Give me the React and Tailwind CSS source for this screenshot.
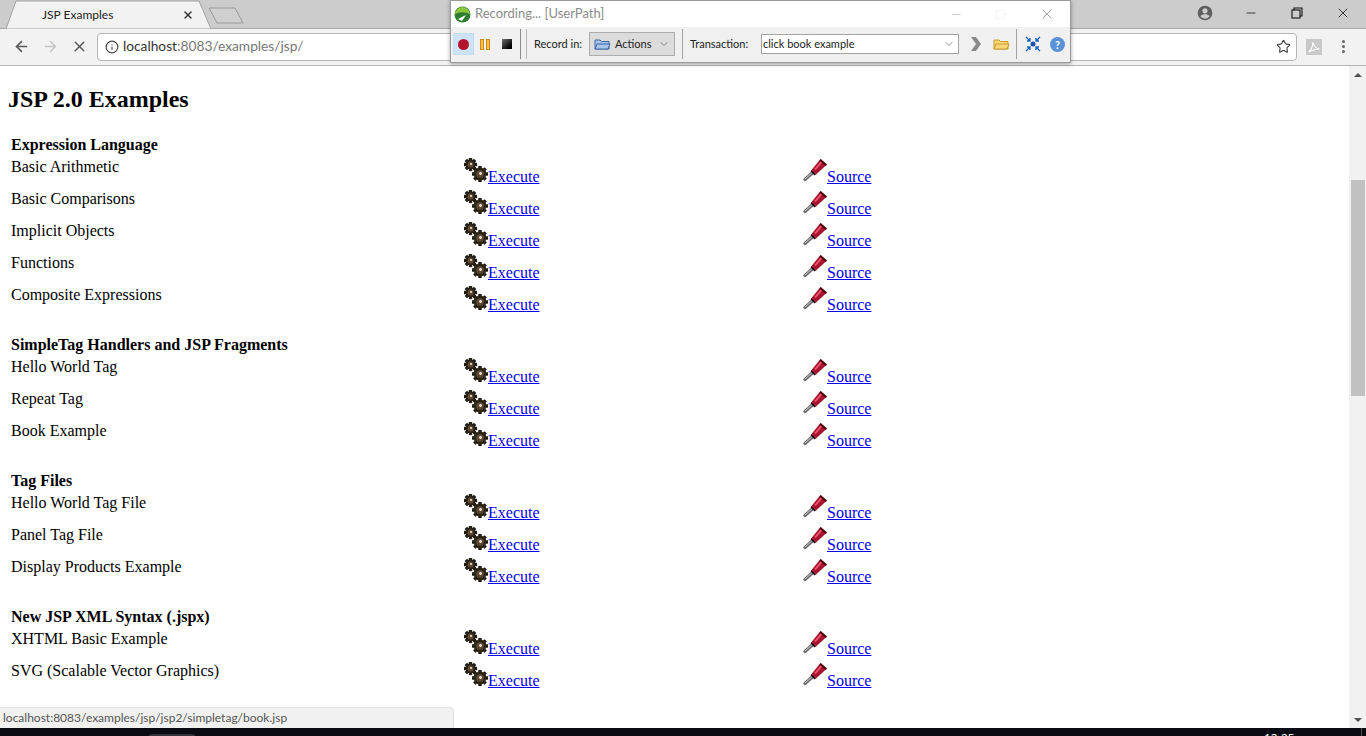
import { Info, X, ArrowLeft, ArrowRight, Star, ChevronDown, Minus, Square } from 'lucide-react'

const SECTIONS = [
  { title: 'Expression Language', rows: ['Basic Arithmetic', 'Basic Comparisons', 'Implicit Objects', 'Functions', 'Composite Expressions'] },
  { title: 'SimpleTag Handlers and JSP Fragments', rows: ['Hello World Tag', 'Repeat Tag', 'Book Example'] },
  { title: 'Tag Files', rows: ['Hello World Tag File', 'Panel Tag File', 'Display Products Example'] },
  { title: 'New JSP XML Syntax (.jspx)', rows: ['XHTML Basic Example', 'SVG (Scalable Vector Graphics)'] },
]

function Gear({ cx, cy, r }) {
  const teeth = [0, 45, 90, 135, 180, 225, 270, 315]
  return (
    <g>
      {teeth.map((a) => (
        <rect key={a} x={cx - 1.7} y={cy - r - 1.6} width="3.4" height="3.2" fill="#1f1a12" transform={`rotate(${a} ${cx} ${cy})`} />
      ))}
      <circle cx={cx} cy={cy} r={r} fill="#2b2318" />
      <circle cx={cx} cy={cy} r={r * 0.6} fill="#5b4a30" />
      <circle cx={cx + 0.5} cy={cy - 0.5} r={r * 0.22} fill="#ece4d2" />
    </g>
  )
}

function GearsIcon() {
  return (
    <svg width="24" height="24" viewBox="0 0 24 24" className="inline-block shrink-0">
      <Gear cx={6.5} cy={6.5} r={5} />
      <Gear cx={16} cy={16} r={6.4} />
    </svg>
  )
}

function DriverIcon() {
  return (
    <svg width="24" height="24" viewBox="0 0 24 24" className="inline-block shrink-0">
      <path d="M2 21.5 L11 13.5" stroke="#6f6f6f" strokeWidth="3.2" strokeLinecap="round" />
      <path d="M2 21 L10.5 13.5" stroke="#c8c8c8" strokeWidth="0.9" />
      <path d="M8.5 12 L17.5 1 L24 6.5 L13 16.5 Z" fill="#a8152c" />
      <path d="M12 11.5 L18.5 4" stroke="#ec5a72" strokeWidth="1.8" />
      <path d="M8.5 12 L13 16.5 L11.5 17.5 L7.5 13.5 Z" fill="#2a0a10" />
      <path d="M17.5 1 L24 6.5 L22.5 8 L16.5 2.5 Z" fill="#4a0812" />
    </svg>
  )
}

function Row({ label }) {
  return (
    <div className="grid h-8 grid-cols-[453px_339px_1fr] pt-0.5">
      <div>{label}</div>
      <div className="flex items-end self-start">
        <GearsIcon />
        <a href="#" className="relative top-[4px] leading-[18px] text-[#0000ee] underline">Execute</a>
      </div>
      <div className="flex items-end self-start">
        <DriverIcon />
        <a href="#" className="relative top-[4px] leading-[18px] text-[#0000ee] underline">Source</a>
      </div>
    </div>
  )
}

function Section({ title, rows }) {
  return (
    <div className="mb-5">
      <div className="mb-0.5 leading-[18px] font-bold">{title}</div>
      {rows.map((r) => <Row key={r} label={r} />)}
    </div>
  )
}

function TabStrip() {
  return (
    <div className="relative h-[29px] shrink-0 border-b border-[#a9a9a9] bg-[#cccccc]">
      <svg width="250" height="29" viewBox="0 0 250 29" className="absolute left-0 top-0">
        <path d="M6 29 L16 1 L199 1 L211 29 Z" fill="#f2f2f2" stroke="#a3a3a3" />
        <path d="M209 8 L235 8 L243 23 L217 23 Z" fill="#cfcfcf" stroke="#9a9a9a" />
      </svg>
      <span className="absolute left-[42px] top-[7px] font-['Lato',sans-serif] text-[12px] leading-4 text-[#222]">JSP Examples</span>
      <X size={12} strokeWidth={3} className="absolute left-[182px] top-[9px] text-[#333]" />
      <svg width="16" height="16" viewBox="0 0 24 24" className="absolute left-[1197px] top-[5px]">
        <path fill="#5f5f5f" d="M12 1a11 11 0 1 0 0 22 11 11 0 0 0 0-22zm0 4a3.8 3.8 0 1 1 0 7.6A3.8 3.8 0 0 1 12 5zm0 15.6a8.6 8.6 0 0 1-7-3.7c1.5-2 4.6-3 7-3s5.5 1 7 3a8.6 8.6 0 0 1-7 3.7z" />
      </svg>
      <Minus size={14} strokeWidth={1.2} className="absolute left-[1244px] top-[6px] text-black" />
      <svg width="12" height="12" viewBox="0 0 12 12" className="absolute left-[1291px] top-[7px]" fill="none" stroke="#111" strokeWidth="1.1">
        <rect x="1" y="3" width="8" height="8" />
        <path d="M3 3V1h8v8H9" />
      </svg>
      <X size={16} strokeWidth={1.1} className="absolute left-[1335px] top-[5px] text-black" />
    </div>
  )
}

function Toolbar() {
  return (
    <div className="flex h-[37px] shrink-0 items-center border-b border-[#b4b4b4] bg-[#f2f2f2] pb-px">
      <ArrowLeft size={17} strokeWidth={2.4} className="ml-[13px] text-[#5a5a5a]" />
      <ArrowRight size={17} strokeWidth={2} className="ml-[12px] text-[#c4c4c4]" />
      <X size={17} strokeWidth={2.2} className="ml-[12px] text-[#5a5a5a]" />
      <div className="ml-[9px] flex h-7 w-[1200px] items-center rounded-sm border border-[#b5b5b5] bg-white pl-[7px] pr-[5px]">
        <Info size={14} strokeWidth={2} className="text-[#444]" />
        <span className="ml-[4px] font-['Lato',sans-serif] text-[13.75px] text-[#333]">localhost<span className="text-[#777]">:8083/examples/jsp/</span></span>
        <Star size={15} strokeWidth={1.8} className="ml-auto text-[#444]" />
      </div>
      <svg width="16" height="16" viewBox="0 0 16 16" className="ml-[9px]">
        <rect width="16" height="16" fill="#c9c9c9" />
        <path d="M2.5 13c2-1 4-5 4.5-10 .8 4 3 6.5 6.5 7-3.5 0-7 1-11 3z" fill="none" stroke="#fff" strokeWidth="1.1" />
      </svg>
      <div className="ml-[20px] flex flex-col gap-[2px]">
        <span className="h-[3px] w-[3px] rounded-full bg-[#666]" />
        <span className="h-[3px] w-[3px] rounded-full bg-[#666]" />
        <span className="h-[3px] w-[3px] rounded-full bg-[#666]" />
      </div>
    </div>
  )
}

function FolderIcon({ fill, stroke }) {
  return (
    <svg width="17" height="14" viewBox="0 0 17 14">
      <path d="M1 12V3h5l1.5 1.5H15V12z" fill={fill} stroke={stroke} />
      <path d="M1 12l2-5h13l-2 5z" fill={fill} stroke={stroke} />
    </svg>
  )
}

function RecorderWindow() {
  return (
    <div className="absolute left-[450px] top-0 z-10 flex h-[63px] w-[621px] flex-col border border-[#9a9a9a] bg-[#f0f0f0] font-['Lato',sans-serif] shadow-[0_1px_4px_rgba(0,0,0,0.35)]">
      <div className="flex h-[26px] shrink-0 items-center bg-white pl-[3px]">
        <svg width="17" height="17" viewBox="0 0 17 17">
          <circle cx="8.5" cy="8.5" r="8" fill="#2f7d32" />
          <path d="M1 8.5a7.5 7.5 0 0 1 15 0C12 5.5 5 5.5 1 8.5z" fill="#8cc63f" />
          <path d="M4 13l8-4-4 6z" fill="#fff" />
        </svg>
        <span className="ml-[4px] text-[13px] text-[#8b8b8b]">Recording... [UserPath]</span>
        <Minus size={13} strokeWidth={1} className="ml-auto text-[#999]" />
        <Square size={11} strokeWidth={1} className="ml-[32px] text-[#e2e2e2]" />
        <X size={16} strokeWidth={1} className="ml-[33px] mr-[15px] text-[#777]" />
      </div>
      <div className="flex flex-1 items-center whitespace-nowrap pb-px text-[11px] text-[#222]">
        <div className="ml-[2px] flex h-[22px] w-[21px] items-center justify-center border border-[#c5ddf2] bg-[#cde4f7]">
          <span className="h-[11px] w-[11px] rounded-full bg-[#b3162c]" />
        </div>
        <div className="ml-[6px] flex gap-[2px]">
          <span className="h-[11px] w-[4px] border border-[#d08a10] bg-[#f6c04a]" />
          <span className="h-[11px] w-[4px] border border-[#d08a10] bg-[#f6c04a]" />
        </div>
        <span className="ml-[12px] h-[10px] w-[10px] bg-gradient-to-br from-[#777] to-black" />
        <span className="ml-[8px] h-[30px] w-px bg-[#8c8c8c]" />
        <span className="ml-[5px] h-[30px] w-px bg-[#b5b5b5]" />
        <span className="ml-[7px] w-[49px]">Record in:</span>
        <div className="ml-[6px] flex h-[24px] w-[86px] items-center border border-[#adadad] bg-[#dcdcdc] pl-[4px]">
          <FolderIcon fill="#a9c6ea" stroke="#3c66a8" />
          <span className="ml-[4px]">Actions</span>
          <ChevronDown size={12} strokeWidth={1.2} className="ml-auto mr-[4px] text-[#444]" />
        </div>
        <span className="ml-[7px] h-[30px] w-px bg-[#a5a5a5]" />
        <span className="ml-[7px] w-[60px]">Transaction:</span>
        <div className="ml-[11px] flex h-[20px] w-[198px] items-center border border-[#a5a5a5] bg-white pl-[1px]">
          click book example
          <ChevronDown size={12} strokeWidth={1.2} className="ml-auto mr-[3px] text-[#444]" />
        </div>
        <svg width="12" height="14" viewBox="0 0 12 14" className="ml-[11px]">
          <path d="M1 0h5l5 7-5 7H1l5-7z" fill="#8a8a8a" />
        </svg>
        <div className="ml-[11px]"><FolderIcon fill="#fbd877" stroke="#c89a2c" /></div>
        <span className="ml-[6px] h-[30px] w-px bg-[#a5a5a5]" />
        <svg width="16" height="16" viewBox="0 0 16 16" className="ml-[8px]" stroke="#1565c0" strokeWidth="1.3" fill="none">
          <circle cx="8" cy="8" r="2.5" fill="#1a4fb0" stroke="none" />
          <path d="M1 1l4 4M5 2v3H2M15 1l-4 4M11 2v3h3M1 15l4-4M5 14v-3H2M15 15l-4-4M11 14v-3h3" />
        </svg>
        <div className="ml-[9px] flex h-[15px] w-[15px] items-center justify-center rounded-full bg-[#5b91d6] text-[11px] leading-none font-bold text-white">?</div>
      </div>
    </div>
  )
}

function Scrollbar() {
  return (
    <div className="flex w-[17px] shrink-0 flex-col bg-[#f1f1f1]">
      <div className="flex h-[17px] items-center justify-center">
        <span className="border-x-4 border-b-4 border-x-transparent border-b-[#505050]" />
      </div>
      <div className="mt-[97px] ml-[2px] h-[216px] w-[14px] bg-[#c1c1c1]" />
      <div className="mt-auto flex h-[17px] items-center justify-center">
        <span className="border-x-4 border-t-4 border-x-transparent border-t-[#505050]" />
      </div>
    </div>
  )
}

export default function App() {
  return (
    <div className="relative flex h-[736px] w-[1366px] flex-col overflow-hidden bg-white">
      <TabStrip />
      <Toolbar />
      <RecorderWindow />
      <div className="relative flex min-h-0 flex-1">
        <div className="flex-1 overflow-hidden pl-[11px] font-['Liberation_Serif',serif] text-base leading-[18px] text-black">
          <h1 className="-ml-[3px] mt-[19px] mb-[23px] text-2xl leading-7 font-bold">JSP 2.0 Examples</h1>
          {SECTIONS.map((s) => <Section key={s.title} title={s.title} rows={s.rows} />)}
        </div>
        <Scrollbar />
        <div className="absolute bottom-0 left-0 h-[21px] w-[454px] rounded-tr-sm border-t border-r border-[#e2e2e2] bg-[#f1f1f1] pl-[3px] font-['Lato',sans-serif] text-[12px] leading-[20px] text-[#555]">
          localhost:8083/examples/jsp/jsp2/simpletag/book.jsp
        </div>
      </div>
      <div className="relative h-2 shrink-0 overflow-hidden bg-[#0b0b14]">
        <span className="absolute left-[148px] top-[6px] h-2 w-12 rounded-sm bg-[#33333b]" />
        <span className="absolute left-[1264px] top-[3px] font-['Open_Sans',sans-serif] text-[12px] leading-4 text-white">12:25</span>
        <span className="absolute left-[1361px] top-0 h-2 w-px bg-[#555]" />
      </div>
    </div>
  )
}
